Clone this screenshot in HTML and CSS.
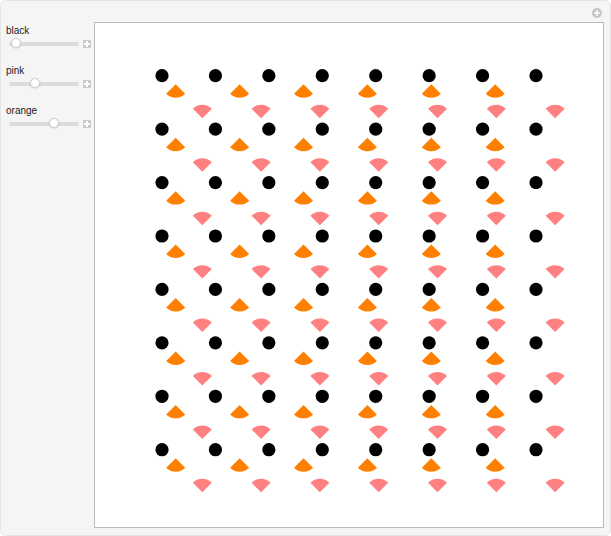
FILE: index.html
```html
<!DOCTYPE html>
<html>
<head>
<meta charset="utf-8">
<link rel="stylesheet" href="styles.css">
</head>
<body>
<div class="panel">
  <div class="header">
    <span class="add-btn">
      <svg width="10" height="10" viewBox="0 0 10 10"><circle cx="5" cy="5" r="5" fill="#c6c6c6"/><path d="M5 2.3v5.4M2.3 5h5.4" stroke="#fff" stroke-width="1.6"/></svg>
    </span>
  </div>
  <div class="body">
    <div class="controls">
      <div class="control">
        <div class="label">black</div>
        <div class="slider-row">
          <div class="track"><span class="thumb" style="left:7px"></span></div>
          <span class="plus"></span>
        </div>
      </div>
      <div class="control">
        <div class="label">pink</div>
        <div class="slider-row">
          <div class="track"><span class="thumb" style="left:26px"></span></div>
          <span class="plus"></span>
        </div>
      </div>
      <div class="control">
        <div class="label">orange</div>
        <div class="slider-row">
          <div class="track"><span class="thumb" style="left:45px"></span></div>
          <span class="plus"></span>
        </div>
      </div>
    </div>
    <div class="graphic">
      <svg width="508" height="504" viewBox="0 0 508 504">
        <defs>
          <circle id="dot" r="6.6" fill="#000"/>
          <path id="osec" d="M0 0 L-9.5 9.5 A13.4 13.4 0 0 0 9.5 9.5 Z" fill="#ff8000"/>
          <path id="psec" d="M0 0 L-9.5 -9.5 A13.4 13.4 0 0 1 9.5 -9.5 Z" fill="#ff8080"/>
          <g id="brow">
            <use href="#dot" x="67" y="52.7"/>
            <use href="#dot" x="120.43" y="52.7"/>
            <use href="#dot" x="173.86" y="52.7"/>
            <use href="#dot" x="227.29" y="52.7"/>
            <use href="#dot" x="280.72" y="52.7"/>
            <use href="#dot" x="334.15" y="52.7"/>
            <use href="#dot" x="387.58" y="52.7"/>
            <use href="#dot" x="441.01" y="52.7"/>
          </g>
          <g id="orow">
            <use href="#osec" x="80.7" y="61.3"/>
            <use href="#osec" x="144.6" y="61.3"/>
            <use href="#osec" x="208.5" y="61.3"/>
            <use href="#osec" x="272.4" y="61.3"/>
            <use href="#osec" x="336.3" y="61.3"/>
            <use href="#osec" x="400.2" y="61.3"/>
          </g>
          <g id="prow">
            <use href="#psec" x="107.3" y="95.3"/>
            <use href="#psec" x="166.1" y="95.3"/>
            <use href="#psec" x="224.9" y="95.3"/>
            <use href="#psec" x="283.7" y="95.3"/>
            <use href="#psec" x="342.5" y="95.3"/>
            <use href="#psec" x="401.3" y="95.3"/>
            <use href="#psec" x="460.1" y="95.3"/>
          </g>
          <g id="cell">
            <use href="#brow"/>
            <use href="#orow"/>
            <use href="#prow"/>
          </g>
        </defs>
        <use href="#cell" y="0"/>
        <use href="#cell" y="53.43"/>
        <use href="#cell" y="106.86"/>
        <use href="#cell" y="160.29"/>
        <use href="#cell" y="213.72"/>
        <use href="#cell" y="267.15"/>
        <use href="#cell" y="320.58"/>
        <use href="#cell" y="374.01"/>
      </svg>
    </div>
  </div>
</div>
</body>
</html>
```
FILE: styles.css
```css
html, body {
  margin: 0;
  padding: 0;
  background: #ffffff;
}
.panel {
  box-sizing: border-box;
  width: 611px;
  height: 536px;
  background: #f5f5f5;
  border: 1px solid #e4e4e4;
  border-radius: 6px;
  display: flex;
  flex-direction: column;
  font-family: "Liberation Sans", Arial, sans-serif;
}
.header {
  height: 21px;
  display: flex;
  justify-content: flex-end;
  align-items: flex-start;
  padding-right: 8px;
  box-sizing: border-box;
  padding-top: 7px;
}
.add-btn {
  width: 10px;
  height: 10px;
  display: block;
}
.add-btn svg {
  display: block;
}
.body {
  display: flex;
  flex-direction: row;
}
.controls {
  width: 93px;
  box-sizing: border-box;
  padding-left: 5px;
  padding-top: 3px;
  display: flex;
  flex-direction: column;
  gap: 15px;
}
.control {
  display: flex;
  flex-direction: column;
}
.label {
  font-size: 10px;
  line-height: 12px;
  height: 12px;
  color: #1a1a1a;
}
.slider-row {
  height: 13px;
  display: flex;
  align-items: center;
  padding-left: 3px;
}
.track {
  position: relative;
  width: 70px;
  height: 4px;
  border-radius: 2px;
  background: #dcdcdc;
}
.thumb {
  position: absolute;
  top: -4px;
  width: 10px;
  height: 10px;
  margin-left: -5px;
  border-radius: 50%;
  background: #ffffff;
  box-sizing: border-box;
  border: 1px solid #cfcfcf;
  box-shadow: 0 0.5px 1.5px rgba(0,0,0,0.18);
}
.plus {
  position: relative;
  width: 8px;
  height: 8px;
  margin-left: 4px;
  background: #c9c9c9;
  border-radius: 1px;
}
.plus::before, .plus::after {
  content: "";
  position: absolute;
  background: #ffffff;
}
.plus::before {
  left: 3px;
  top: 1px;
  width: 2px;
  height: 6px;
}
.plus::after {
  left: 1px;
  top: 3px;
  width: 6px;
  height: 2px;
}
.graphic {
  box-sizing: border-box;
  width: 510px;
  height: 506px;
  background: #ffffff;
  border: 1px solid #bcbcbc;
}
.graphic svg {
  display: block;
}
```
